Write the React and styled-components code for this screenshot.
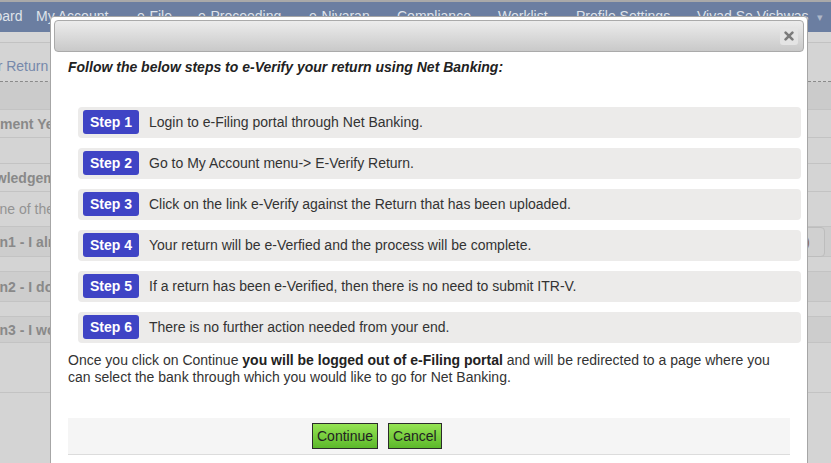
import React from "react";
import styled, { createGlobalStyle } from "styled-components";

const GlobalStyle = createGlobalStyle`
  html, body {
    margin: 0;
    padding: 0;
    background: #d4d4d4;
    font-family: "Liberation Sans", Arial, sans-serif;
    overflow: hidden;
  }
`;

const navItems = [
  { label: "Dashboard", w: 82 },
  { label: "My Account", w: 101 },
  { label: "e-File", w: 61 },
  { label: "e-Proceeding", w: 111 },
  { label: "e-Nivaran", w: 88 },
  { label: "Compliance", w: 101 },
  { label: "Worklist", w: 78 },
  { label: "Profile Settings", w: 121 },
  { label: "Vivad Se Vishwas", w: 120 },
];

const rows = [
  { text: "Assessment Year", shift: -49, h: 28, bold: true },
  { text: "", h: 26 },
  { text: "Acknowledgement No.", shift: -47, h: 28, bold: true },
  { text: "Select one of the options below", shift: -51, h: 35 },
  { text: "Option1 - I already have an EVC", shift: -37, h: 30, bold: true, dark: true, action: true },
  { text: "", h: 15 },
  { text: "Option2 - I do not have an EVC", shift: -37, h: 30, bold: true, dark: true },
  { text: "", h: 15 },
  { text: "Option3 - I would like to use Net Banking", shift: -37, h: 26, bold: true, dark: true },
  { text: "", h: 50 },
  { text: "", h: 70 },
];

const steps = [
  "Login to e-Filing portal through Net Banking.",
  "Go to My Account menu-> E-Verify Return.",
  "Click on the link e-Verify against the Return that has been uploaded.",
  "Your return will be e-Verfied and the process will be complete.",
  "If a return has been e-Verified, then there is no need to submit ITR-V.",
  "There is no further action needed from your end.",
];

export default function App() {
  return (
    <>
      <GlobalStyle />
      <Page>
        <TopLine />
        <Nav>
          {navItems.map((item) => (
            <NavItem key={item.label} w={item.w}>
              {item.label}
            </NavItem>
          ))}
          <Caret>▾</Caret>
        </Nav>
        <SubBar />
        <Tabs>
          <TabLink>Your Return</TabLink>
        </Tabs>
        <Band />
        {rows.map((row, i) => (
          <Row key={i} h={row.h} dark={row.dark}>
            <Cell bold={row.bold} shift={row.shift}>
              {row.text}
            </Cell>
            {row.action && <ActionBox>(Recommended)</ActionBox>}
          </Row>
        ))}
      </Page>

      <Dialog>
        <Header>
          <CloseButton aria-label="close">
            <svg width="10" height="10" viewBox="0 0 10 10">
              <path
                d="M1.6 1.6 L8.4 8.4 M8.4 1.6 L1.6 8.4"
                stroke="#7b7b7b"
                strokeWidth="2.6"
                strokeLinecap="round"
              />
            </svg>
          </CloseButton>
        </Header>
        <Body>
          <Title>Follow the below steps to e-Verify your return using Net Banking:</Title>
          <Steps>
            {steps.map((s, i) => (
              <StepRow key={i}>
                <Badge>Step {i + 1}</Badge>
                <StepText>{s}</StepText>
              </StepRow>
            ))}
          </Steps>
          <Note>
            Once you click on Continue <b>you will be logged out of e-Filing portal</b> and
            will be redirected to a page where you can select the bank through which you
            would like to go for Net Banking.
          </Note>
          <ButtonPane>
            <GreenButton>Continue</GreenButton>
            <GreenButton>Cancel</GreenButton>
          </ButtonPane>
        </Body>
      </Dialog>
    </>
  );
}

const Page = styled.div`
  width: 100%;
  height: 463px;
  overflow: hidden;
`;

const TopLine = styled.div`
  height: 2px;
  background: #a9a9a9;
`;

const Nav = styled.div`
  display: flex;
  align-items: center;
  height: 30px;
  background: #6b7ea1;
  margin-left: -46px;
  white-space: nowrap;
`;

const NavItem = styled.div`
  flex: 0 0 ${(p) => p.w}px;
  color: #dfe3ea;
  font-size: 14px;
  margin-top: -2px;
`;

const Caret = styled.div`
  color: #aeb7c8;
  font-size: 11px;
`;

const SubBar = styled.div`
  height: 10px;
  background: #d6d6d6;
  border-bottom: 1px solid #c2c2c2;
`;

const Tabs = styled.div`
  height: 39px;
  box-sizing: border-box;
  display: flex;
  align-items: center;
  padding-top: 8px;
  border-bottom: 1px dashed #8a8a8a;
`;

const TabLink = styled.span`
  margin-left: -26px;
  color: #7688ab;
  font-size: 14px;
`;

const Band = styled.div`
  height: 27px;
  background: #cbcbcb;
`;

const Row = styled.div`
  display: flex;
  align-items: center;
  justify-content: space-between;
  height: ${(p) => p.h}px;
  box-sizing: border-box;
  border-top: 1px solid #c3c3c3;
  background: ${(p) => (p.dark ? "#cdcdcd" : "#d4d4d4")};
  white-space: nowrap;
`;

const Cell = styled.div`
  margin-left: ${(p) => p.shift || 0}px;
  font-size: 14px;
  font-weight: ${(p) => (p.bold ? "bold" : "normal")};
  color: ${(p) => (p.bold ? "#898989" : "#939393")};
`;

const ActionBox = styled.div`
  margin-right: 6px;
  height: 28px;
  line-height: 28px;
  padding: 0 14px 0 20px;
  border: 1px solid #bdbdbd;
  border-radius: 4px;
  background: #d0d0d0;
  color: #8d6c4e;
  font-size: 14px;
`;

const Dialog = styled.div`
  position: absolute;
  top: 16px;
  left: 50px;
  width: 758px;
  box-sizing: border-box;
  background: #fff;
  border: 1px solid #a6a6a6;
  border-radius: 4px;
  padding: 3px 3px 14px;
`;

const Header = styled.div`
  position: relative;
  height: 32px;
  box-sizing: border-box;
  border: 1px solid #aaa;
  border-radius: 4px;
  background: linear-gradient(#ececec, #c9c9c9);
`;

const CloseButton = styled.div`
  position: absolute;
  right: 5px;
  top: 6px;
  width: 18px;
  height: 18px;
  border-radius: 3px;
  background: #e4e4e4;
  display: flex;
  align-items: center;
  justify-content: center;
`;

const Body = styled.div`
  padding: 6px 14px 0;
`;

const Title = styled.div`
  font-size: 14px;
  line-height: 18px;
  font-weight: bold;
  font-style: italic;
  color: #222;
  margin-bottom: 31px;
`;

const Steps = styled.div`
  display: flex;
  flex-direction: column;
  gap: 10px;
  margin: 0 -11px 0 10px;
`;

const StepRow = styled.div`
  display: flex;
  align-items: center;
  height: 31px;
  padding: 0 5px 1px;
  box-sizing: border-box;
  background: #ecebea;
  border-radius: 4px;
`;

const Badge = styled.span`
  display: inline-flex;
  align-items: center;
  justify-content: center;
  width: 56px;
  height: 24px;
  border-radius: 3px;
  background: #3f44c5;
  color: #fff;
  font-size: 14px;
  font-weight: bold;
`;

const StepText = styled.span`
  margin-left: 10px;
  font-size: 14px;
  color: #333;
`;

const Note = styled.p`
  margin: 9px 0 0;
  font-size: 14px;
  line-height: 17px;
  color: #333;
  b {
    color: #222;
  }
`;

const ButtonPane = styled.div`
  margin-top: 32px;
  display: flex;
  gap: 10px;
  padding: 5px 0 5px 244px;
  background: #f5f5f5;
  border-bottom: 1px solid #dcdcdc;
`;

const GreenButton = styled.button`
  height: 26px;
  padding: 0 4px;
  border: 1px solid #2b2b2b;
  border-radius: 0;
  background: linear-gradient(#95e453, #5cb82b);
  color: #222;
  font-family: "Liberation Sans", Arial, sans-serif;
  font-size: 14px;
  cursor: pointer;
`;
